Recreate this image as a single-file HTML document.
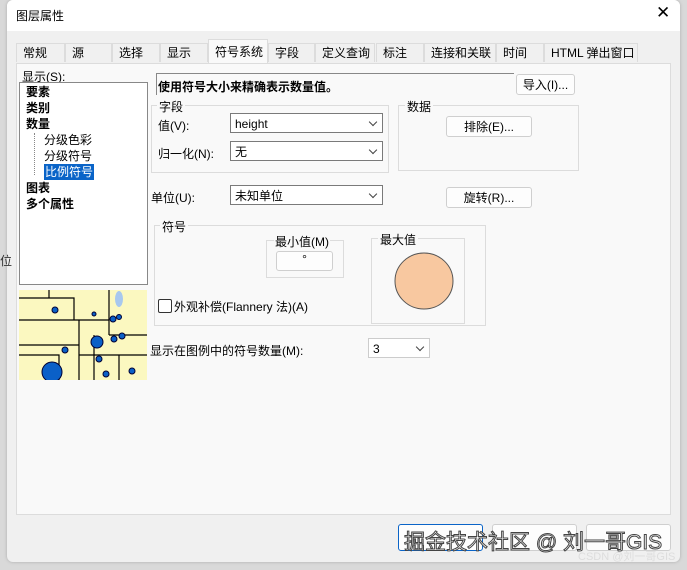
<!DOCTYPE html><html><head><meta charset="utf-8"><style>
body{margin:0;width:687px;height:570px;background:#d9d9d9;position:relative;overflow:hidden;font-family:"Liberation Sans","Noto Sans CJK SC",sans-serif;font-size:12px;color:#000}
.a{position:absolute;white-space:nowrap}
.dlg{left:7px;top:0;width:673px;height:562px;background:#f0f0f0;border-radius:6px;box-shadow:0 0 3px #aaa}
.panel{left:16px;top:63px;width:653px;height:450px;background:#f9f9f9;border:1px solid #dcdcdc}
.tab{top:43px;height:19px;line-height:19px;background:#f0f0f0;border:1px solid #dcdcdc;border-bottom:none;padding-left:6px;box-sizing:border-box}
.sel{background:#f9f9f9;top:39px;height:24px;line-height:24px}
.combo{background:#fff;border:1px solid #7a7a7a;height:20px;line-height:20px;padding-left:4px;box-sizing:border-box}
.combo:after{content:"";position:absolute;right:6px;top:5px;width:5px;height:5px;border-right:1px solid #444;border-bottom:1px solid #444;transform:rotate(45deg)}
.btn{background:#fdfdfd;border:1px solid #cfcfcf;border-radius:3px;text-align:center;height:21px;line-height:21px;box-sizing:border-box}
.grp{border:1px solid #dcdcdc}
.b{font-weight:bold}
</style></head><body>
<div class="a dlg"></div>
<div class="a" style="left:7px;top:0;width:673px;height:31px;background:#fff;border-radius:6px 6px 0 0"></div>
<div class="a" style="left:16px;top:7px;font-size:12px">图层属性</div>
<div class="a" style="left:656px;top:3px;font-size:17px">✕</div>
<div class="a panel"></div>
<div class="a tab" style="left:16px;width:49px">常规</div>
<div class="a tab" style="left:65px;width:47px">源</div>
<div class="a tab" style="left:112px;width:48px">选择</div>
<div class="a tab" style="left:160px;width:48px">显示</div>
<div class="a tab sel" style="left:208px;width:60px">符号系统</div>
<div class="a tab" style="left:268px;width:47px">字段</div>
<div class="a tab" style="left:315px;width:60px">定义查询</div>
<div class="a tab" style="left:376px;width:48px">标注</div>
<div class="a tab" style="left:424px;width:72px">连接和关联</div>
<div class="a tab" style="left:496px;width:48px">时间</div>
<div class="a tab" style="left:544px;width:94px">HTML 弹出窗口</div>
<div class="a" style="left:22px;top:68px">显示(S):</div>
<div class="a" style="left:19px;top:82px;width:127px;height:201px;background:#fff;border:1px solid #888;line-height:16px">
<div class="a b" style="left:6px;top:1px">要素</div>
<div class="a b" style="left:6px;top:17px">类别</div>
<div class="a b" style="left:6px;top:33px">数量</div>
<div class="a" style="left:14px;top:50px;height:42px;border-left:1px dotted #888"></div>
<div class="a" style="left:24px;top:49px">分级色彩</div>
<div class="a" style="left:24px;top:65px">分级符号</div>
<div class="a" style="left:24px;top:81px;background:#0a64c8;color:#fff;padding:0 1px">比例符号</div>
<div class="a b" style="left:6px;top:97px">图表</div>
<div class="a b" style="left:6px;top:113px">多个属性</div>
</div>
<svg class="a" style="left:19px;top:290px" width="128" height="90"><rect width="128" height="90" fill="#fbf8c0"/><g stroke="#000" fill="none" stroke-width="1.2"><path d="M0 8H30V0M30 8H55V30H90M0 30H55M0 55H60M0 65H40V90M60 30V90M90 0V45M90 45H128M75 45V90M60 65H128M100 65V90"/></g><g fill="#0a60c8" stroke="#003"><circle cx="36" cy="20" r="3"/><circle cx="75" cy="24" r="2"/><circle cx="94" cy="29" r="3"/><circle cx="100" cy="27" r="2.5"/><circle cx="78" cy="52" r="6"/><circle cx="95" cy="49" r="3"/><circle cx="46" cy="60" r="3"/><circle cx="103" cy="46" r="3"/><circle cx="33" cy="82" r="10"/><circle cx="113" cy="81" r="3"/><circle cx="87" cy="84" r="3"/><circle cx="80" cy="69" r="3"/><circle cx="134" cy="74" r="3"/></g><ellipse cx="100" cy="9" rx="4" ry="8" fill="#a8c8ee"/></svg>
<div class="a" style="left:156px;top:73px;width:357px;height:21px;border-top:1px solid #888;border-left:1px solid #888"></div>
<div class="a b" style="left:158px;top:78px">使用符号大小来精确表示数量值。</div>
<div class="a btn" style="left:516px;top:74px;width:59px">导入(I)...</div>
<div class="a grp" style="left:151px;top:105px;width:236px;height:66px"></div>
<div class="a" style="left:157px;top:98px;background:#f9f9f9;padding:0 2px">字段</div>
<div class="a" style="left:158px;top:117px">值(V):</div>
<div class="a combo" style="left:230px;top:113px;width:153px">height</div>
<div class="a" style="left:158px;top:145px">归一化(N):</div>
<div class="a combo" style="left:230px;top:141px;width:153px">无</div>
<div class="a grp" style="left:398px;top:105px;width:179px;height:64px"></div>
<div class="a" style="left:405px;top:98px;background:#f9f9f9;padding:0 2px">数据</div>
<div class="a btn" style="left:446px;top:116px;width:86px">排除(E)...</div>
<div class="a" style="left:151px;top:189px">单位(U):</div>
<div class="a combo" style="left:230px;top:185px;width:153px">未知单位</div>
<div class="a btn" style="left:446px;top:187px;width:86px">旋转(R)...</div>
<div class="a grp" style="left:154px;top:225px;width:330px;height:99px"></div>
<div class="a" style="left:160px;top:218px;background:#f9f9f9;padding:0 2px">符号</div>
<div class="a grp" style="left:266px;top:240px;width:76px;height:36px"></div>
<div class="a" style="left:274px;top:233px;background:#f9f9f9;padding:0 1px">最小值(M)</div>
<div class="a btn" style="left:276px;top:251px;width:57px;height:20px;line-height:14px">°</div>
<div class="a grp" style="left:371px;top:238px;width:92px;height:84px"></div>
<div class="a" style="left:378px;top:231px;background:#f9f9f9;padding:0 2px">最大值</div>
<svg class="a" style="left:393px;top:251px" width="64" height="60"><ellipse cx="31" cy="30" rx="29" ry="28" fill="#f8c8a0" stroke="#555"/></svg>
<div class="a" style="left:158px;top:299px;width:12px;height:12px;border:1px solid #333;border-radius:2px;background:#fff"></div>
<div class="a" style="left:174px;top:298px">外观补偿(Flannery 法)(A)</div>
<div class="a" style="left:150px;top:342px">显示在图例中的符号数量(M):</div>
<div class="a combo" style="left:368px;top:338px;width:62px;border-color:#ccc">3</div>
<div class="a btn" style="left:398px;top:524px;width:85px;height:27px;border:1px solid #0a64c8"></div>
<div class="a btn" style="left:492px;top:524px;width:85px;height:27px"></div>
<div class="a btn" style="left:586px;top:524px;width:85px;height:27px"></div>
<div class="a" style="left:404px;top:526px;font-size:21px;color:#fff;-webkit-text-stroke:1px #444">掘金技术社区 @ 刘一哥GIS</div>
<div class="a" style="left:578px;top:548px;font-size:11px;color:#ddd">CSDN @刘一哥GIS</div>
<div class="a" style="left:0;top:252px;font-size:12px;color:#333">位</div>
</body></html>
